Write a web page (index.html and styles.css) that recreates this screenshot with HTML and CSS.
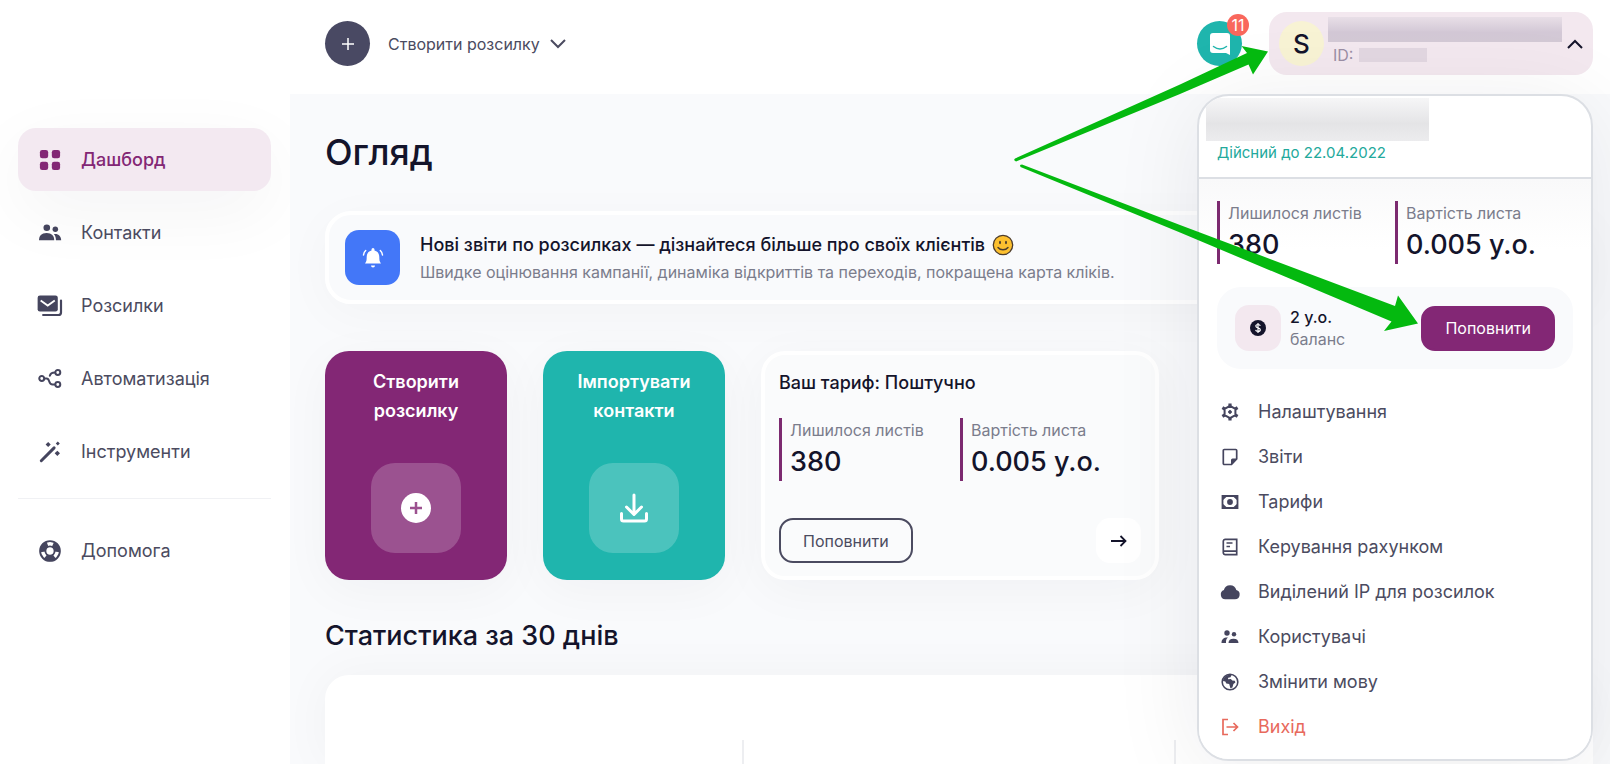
FILE: index.html
```html
<!DOCTYPE html>
<html lang="uk">
<head>
    <meta charset="UTF-8">
    <meta name="viewport" content="width=device-width, initial-scale=1.0">
    <title>Огляд</title>
    <link rel="stylesheet" href="styles.css">
</head>
<body>
    <div class="app">
        <aside class="sidebar">
            <nav class="nav">
                <a class="nav-item active" href="#dashboard">
                    <svg class="nav-icon" viewBox="0 0 24 24" fill="currentColor"><rect x="1" y="1" width="9" height="9" rx="2.500"/><rect x="14" y="1" width="9" height="9" rx="2.500"/><rect x="1" y="14" width="9" height="9" rx="2.500"/><rect x="14" y="14" width="9" height="9" rx="2.500"/></svg>
                    Дашборд
                </a>
                <a class="nav-item" href="#contacts">
                    <svg class="nav-icon" viewBox="0 0 24 24" fill="currentColor"><circle cx="8.500" cy="6.300" r="3.600"/><circle cx="17.800" cy="8" r="3"/><path d="M0 20c0-4.800 2.700-7.900 8.300-7.900s8.300 3.100 8.300 7.900z"/><path d="M18.500 20c0-2.900-.8-5.200-2.300-6.900 4.700-.8 8 2 8 6.900z"/></svg>
                    Контакти
                </a>
                <a class="nav-item" href="#campaigns">
                    <svg class="nav-icon" viewBox="0 0 24 24" fill="currentColor"><rect x="-1.500" y=".5" width="22" height="17.500" rx="2.500"/><path d="M1.800 6l7.700 5.500L17.200 6" fill="none" stroke="#fff" stroke-width="2"/><path d="M24 6v13a2.800 2.800 0 0 1-2.800 2.800H4.500" fill="none" stroke="currentColor" stroke-width="2.400" stroke-linecap="round"/></svg>
                    Розсилки
                </a>
                <a class="nav-item" href="#automation">
                    <svg class="nav-icon" viewBox="0 0 24 24" fill="none" stroke="currentColor" stroke-width="2.200"><circle cx="3" cy="11.500" r="2.700"/><circle cx="20.500" cy="5" r="2.700"/><circle cx="20.500" cy="18" r="2.700"/><path d="M6 11.500h2.300c4 0 1.500 6.500 6.500 6.500h2.800M11.800 8.500c.6-2.400 2-3.500 5.600-3.500" stroke-linecap="round"/></svg>
                    Автоматизація
                </a>
                <a class="nav-item" href="#tools">
                    <svg class="nav-icon" viewBox="0 0 24 24" fill="currentColor"><path d="M2.500 21.500L16.500 7.500" stroke="currentColor" stroke-width="3.200" stroke-linecap="round"/><path d="M10 1l2.800 2.800L10 6.600 7.200 3.800zM20.500.5l2.200 2.200-2.200 2.200-2.200-2.200zM20 10.500l2.900 2.900-2.900 2.900-2.900-2.900z"/></svg>
                    Інструменти
                </a>
            </nav>
            <hr class="nav-line">
            <a class="nav-item" href="#help">
                <svg class="nav-icon" viewBox="0 0 24 24"><circle cx="12" cy="12" r="7.800" fill="none" stroke="currentColor" stroke-width="6.500" stroke-dasharray="10.340 6" stroke-dashoffset="-7.090"/><circle cx="12" cy="12" r="10.800" fill="none" stroke="currentColor" stroke-width="2"/><circle cx="12" cy="12" r="5" fill="none" stroke="currentColor" stroke-width="2"/></svg>
                Допомога
            </a>
        </aside>

        <main class="main">
            <header class="topbar">
                <button class="create" type="button">
                    <span class="create-plus"><svg width="14" height="14" viewBox="0 0 14 14" fill="none" stroke="currentColor" stroke-width="1.500"><path d="M7 1v12M1 7h12"/></svg></span>
                    Створити розсилку
                    <svg width="16" height="10" viewBox="0 0 16 10" fill="none" stroke="currentColor" stroke-width="2"><path d="M1 1l7 7 7-7"/></svg>
                </button>
                <div class="topbar-right">
                    <button class="chat" type="button" aria-label="Чат">
                        <svg width="20" height="22" viewBox="0 0 20 22"><path d="M3 0h14a3 3 0 0 1 3 3v19l-4-2H3a3 3 0 0 1-3-3V3a3 3 0 0 1 3-3z" fill="#fff"/><path d="M3.500 13.500c4 3 9 3 13 0" fill="none" stroke="#1fb5ad" stroke-width="1.500" stroke-linecap="round"/></svg>
                        <span class="badge">11</span>
                    </button>
                    <div class="account">
                        <button class="account-btn" type="button" aria-expanded="true">
                            <span class="avatar">S</span>
                            <span class="account-info">
                                <span class="hidden-name"></span>
                                <span class="account-id">ID: <span class="hidden-id"></span></span>
                            </span>
                            <svg width="16" height="10" viewBox="0 0 16 10" fill="none" stroke="currentColor" stroke-width="2"><path d="M1 9l7-7 7 7"/></svg>
                        </button>
                        <div class="menu">
                            <div class="menu-head">
                                <div class="hidden-plan"></div>
                                <p class="valid">Дійсний до 22.04.2022</p>
                            </div>
                            <div class="menu-body">
                                <div class="stats">
                                    <div class="stat"><span class="stat-label">Лишилося листів</span><span class="stat-value">380</span></div>
                                    <div class="stat"><span class="stat-label">Вартість листа</span><span class="stat-value">0.005 у.о.</span></div>
                                </div>
                                <div class="balance">
                                    <span class="balance-icon"><svg width="16" height="16" viewBox="0 0 16 16"><circle cx="8" cy="8" r="8" fill="#14142b"/><path d="M10.300 5.800C10 4.900 9.200 4.500 8 4.500c-1.300 0-2.200.6-2.200 1.600 0 2.300 4.500 1.300 4.500 3.700 0 1.100-1 1.700-2.300 1.700s-2.200-.6-2.400-1.600M8 3v10" fill="none" stroke="#fff" stroke-width="1.200"/></svg></span>
                                    <span class="balance-text"><b>2 у.о.</b><span>баланс</span></span>
                                    <button class="btn btn-fill" type="button">Поповнити</button>
                                </div>
                                <nav class="menu-list">
                                    <a href="#settings"><svg class="menu-icon" viewBox="0 0 18 18" fill="none" stroke="currentColor"><path d="M9 2.800l5.400 3.100v6.200L9 15.200l-5.400-3.100V5.900z" stroke-width="2" stroke-linejoin="round"/><path d="M9 .5v3M9 14.500v3M1.400 4.700L4 6.200M14 11.800l2.600 1.500M1.400 13.300L4 11.800M14 6.200l2.600-1.500" stroke-width="3.200"/><circle cx="9" cy="9" r="1.400" fill="currentColor" stroke-width="1"/></svg>Налаштування</a>
                                    <a href="#reports"><svg class="menu-icon" viewBox="0 0 18 18"><path d="M3.300 1.500h11.400a1 1 0 0 1 1 1v8.500L10.500 16.500H3.300a1 1 0 0 1-1-1v-13a1 1 0 0 1 1-1z" fill="none" stroke="currentColor" stroke-width="1.700"/><path d="M16 10.500h-4.500a1.500 1.500 0 0 0-1.500 1.500v5z" fill="currentColor"/></svg>Звіти</a>
                                    <a href="#prices"><svg class="menu-icon" viewBox="0 0 18 18"><path d="M1.500 3h15v12h-15z" fill="none" stroke="currentColor" stroke-width="1.800"/><path d="M1 2.500h6L1 8zM17 2.500h-6L17 8zM1 15.500h6L1 10zM17 15.500h-6l6-5.500z" fill="currentColor"/><circle cx="9" cy="9" r="2.900" fill="currentColor"/></svg>Тарифи</a>
                                    <a href="#billing"><svg class="menu-icon" viewBox="0 0 18 18" fill="none" stroke="currentColor" stroke-width="1.700"><path d="M4.300 1.300h11.400v15.400H4.300a2 2 0 0 1-2-2V3.300a2 2 0 0 1 2-2zM2.500 13.200h13M5.500 5h6M5.500 8.500h3.500"/></svg>Керування рахунком</a>
                                    <a href="#ip"><svg class="menu-icon" viewBox="0 0 18 18" fill="currentColor"><path d="M4.200 16.200a4.700 4.700 0 0 1-1.300-9.100 6.400 6.400 0 0 1 12.400-.1A4.700 4.700 0 0 1 14 16.200z"/></svg>Виділений IP для розсилок</a>
                                    <a href="#users"><svg class="menu-icon" viewBox="0 0 18 18" fill="currentColor"><circle cx="6" cy="5" r="2.700"/><circle cx="13" cy="6.300" r="2.200"/><path d="M.5 15c0-3.700 2.200-5.600 6.500-5.400C5.300 10.900 4.800 12.600 5 15zM7.500 15c0-2.800 1.800-4.300 5-4.300s5 1.500 5 4.300z"/></svg>Користувачі</a>
                                    <a href="#language"><svg class="menu-icon" viewBox="0 0 18 18"><circle cx="9" cy="9" r="7.800" fill="none" stroke="currentColor" stroke-width="1.600"/><path d="M2 8C2.500 4 6 1.200 10.500 2L9.500 4.300l-2.300.4-.3 1.600 3-.3 1.300 1.500 2.600.3.600 1.700-2 1.600-1 3.400-2 .8-1.200-4.400-2.900-.5-1-2z" fill="currentColor"/></svg>Змінити мову</a>
                                    <a class="logout" href="#logout"><svg class="menu-icon" viewBox="0 0 18 18" fill="none" stroke="currentColor" stroke-width="1.700"><path d="M7 1.500H2v15h5M5.500 9h11M12.500 5l4 4-4 4"/></svg>Вихід</a>
                                </nav>
                            </div>
                        </div>
                    </div>
                </div>
                <!-- pointers to the account button and the top-up button -->
                <svg class="arrows" width="410" height="300" viewBox="1010 40 410 300" fill="#04b90f" aria-hidden="true">
                    <path d="M1014 160L1015 158.500 1180 84.500 1247 53 1241.500 46 1268 51.500 1253 74.500 1248.500 64.500 1180 94 1016 161.500z"/>
                    <path d="M1020 165L1022 164.500 1180 225 1395 306 1398 295.500 1418 323.500 1384 331 1391.500 321.500 1180 232.500 1020.500 167z"/>
                </svg>
            </header>

            <section class="content">
                <h1>Огляд</h1>
                <div class="banner">
                    <span class="banner-icon"><svg width="20" height="20" viewBox="0 0 20 20" fill="#fff"><path d="M2 15.500c1.500-2 1.700-3.500 1.700-6.500 0-3.400 1.900-5.800 4.800-6.400V1.500a1.500 1.500 0 0 1 3 0v1.100c2.900.6 4.800 3 4.800 6.400 0 3 .2 4.500 1.700 6.500zM8 17.500h4a2 2 0 0 1-4 0z"/><path d="M2.700 2.500C1.300 3.700.7 5.200.5 7M17.300 2.500c1.400 1.200 2 2.700 2.200 4.500" fill="none" stroke="#fff" stroke-width="1.500" stroke-linecap="round"/></svg></span>
                    <div>
                        <h2 class="banner-title">Нові звіти по розсилках — дізнайтеся більше про своїх клієнтів <svg class="smile" width="22" height="22" viewBox="0 0 22 22"><circle cx="11" cy="11" r="9.700" fill="#fdc02f" stroke="#4d3c2c" stroke-width="1.300"/><ellipse cx="8" cy="8.500" rx="1" ry="1.800" fill="#4d3c2c"/><ellipse cx="14" cy="8.500" rx="1" ry="1.800" fill="#4d3c2c"/><path d="M6 13.500c2.500 3 7.500 3 10 0" fill="none" stroke="#4d3c2c" stroke-width="1.400" stroke-linecap="round"/></svg></h2>
                        <p class="banner-text">Швидке оцінювання кампанії, динаміка відкриттів та переходів, покращена карта кліків.</p>
                    </div>
                </div>

                <div class="cards">
                    <a class="action purple" href="#create">
                        Створити розсилку
                        <span class="action-icon"><svg width="30" height="30" viewBox="0 0 30 30"><circle cx="15" cy="15" r="15" fill="#fff"/><path d="M15 9v12M9 15h12" stroke="#9c518f" stroke-width="2.500"/></svg></span>
                    </a>
                    <a class="action teal" href="#import">
                        Імпортувати контакти
                        <span class="action-icon"><svg width="30" height="30" viewBox="0 0 30 30" fill="none" stroke="#fff" stroke-width="3" stroke-linecap="round" stroke-linejoin="round"><path d="M15 2v19M7.500 14l7.500 7.500 7.500-7.500M2.500 20.500v5.500a2 2 0 0 0 2 2h21a2 2 0 0 0 2-2v-5.500"/></svg></span>
                    </a>
                    <div class="plan">
                        <h2>Ваш тариф: Поштучно</h2>
                        <div class="stats">
                            <div class="stat"><span class="stat-label">Лишилося листів</span><span class="stat-value">380</span></div>
                            <div class="stat"><span class="stat-label">Вартість листа</span><span class="stat-value">0.005 у.о.</span></div>
                        </div>
                        <div class="plan-foot">
                            <button class="btn" type="button">Поповнити</button>
                            <a class="more" href="#plan" aria-label="Докладніше"><svg width="16" height="12" viewBox="0 0 16 12" fill="none" stroke="currentColor" stroke-width="1.800"><path d="M0 6h14.500M9.500 1l5 5-5 5"/></svg></a>
                        </div>
                    </div>
                </div>

                <h2 class="section-title">Статистика за 30 днів</h2>
                <div class="panel">
                    <div></div>
                    <div class="panel-mid"></div>
                    <div></div>
                </div>
            </section>
        </main>
    </div>
</body>
</html>
```

FILE: styles.css
```css
* {
    box-sizing: border-box;
}
body {
    margin: 0;
    font-family: Inter, "Liberation Sans", sans-serif;
    font-size: 16px;
    color: #4b4b60;
    background: #fff;
}
h1, h2, p {
    margin: 0;
    color: #14142b;
    font-weight: 500;
}
a {
    color: inherit;
    text-decoration: none;
}
button {
    font: inherit;
    color: inherit;
    background: none;
    border: 0;
    padding: 0;
    cursor: pointer;
}
svg {
    flex: none;
    overflow: visible;
}
.app {
    display: flex;
    min-height: 100vh;
}

/* sidebar */
.sidebar {
    flex: none;
    width: 290px;
    padding: 128px 19px 0 18px;
}
.nav {
    display: flex;
    flex-direction: column;
    gap: 10px;
}
.nav-item {
    display: flex;
    align-items: center;
    gap: 19px;
    height: 63px;
    padding: 0 20px;
    border-radius: 18px;
    font-size: 18px;
}
.nav-item.active {
    color: #832775;
    font-weight: 500;
    background: #f3e9f1;
    box-shadow: 0 20px 70px rgba(20, 20, 43, 0.05);
}
.nav-icon {
    width: 24px;
    height: 24px;
    padding: 1px;
    color: #45455e;
}
.active .nav-icon {
    color: #832775;
}
.nav-line {
    margin: 15px 0 20px;
    border: 0;
    border-top: 1px solid #f0f1f4;
}

/* top bar */
.main {
    flex: 1;
    min-width: 0;
    display: flex;
    flex-direction: column;
}
.topbar {
    position: relative;
    z-index: 1;
    display: flex;
    justify-content: space-between;
    padding: 12px 17px 19px 35px;
}
.create {
    display: flex;
    align-items: center;
    gap: 10px;
}
.create-plus {
    display: flex;
    align-items: center;
    justify-content: center;
    width: 45px;
    height: 45px;
    margin-right: 8px;
    border-radius: 50%;
    color: #fff;
    background: #494963;
}
.topbar-right {
    display: flex;
    align-items: center;
    gap: 27px;
}
.chat {
    position: relative;
    display: flex;
    align-items: center;
    justify-content: center;
    width: 45px;
    height: 45px;
    border-radius: 50%;
    background: #1fb5ad;
}
.badge {
    position: absolute;
    top: -7px;
    right: -7px;
    width: 22px;
    border-radius: 50%;
    line-height: 22px;
    color: #fff;
    background: #f9675c;
}
.account {
    position: relative;
}
.account-btn {
    display: flex;
    align-items: center;
    width: 324px;
    height: 63px;
    padding: 0 10px;
    border-radius: 18px;
    color: #14142b;
    background: #f3e8ef;
}
.avatar {
    flex: none;
    width: 45px;
    border-radius: 50%;
    font-size: 26px;
    font-weight: 500;
    line-height: 45px;
    background: #f8f3d4;
}
.account-info {
    flex: 1;
    display: flex;
    flex-direction: column;
    gap: 3px;
    margin: 0 5px 0 4px;
    padding-bottom: 6px;
}
.hidden-name {
    height: 25px;
    background: linear-gradient(#e8dfe7, #d3c8d6 60%, #d3c9d5);
}
.account-id {
    display: flex;
    align-items: center;
    gap: 6px;
    padding-left: 5px;
    line-height: 20px;
    color: #9b8fa5;
}
.hidden-id {
    width: 68px;
    height: 14px;
    background: #e2d7e1;
}

/* account drop-down */
.menu {
    position: absolute;
    top: 82px;
    right: 0;
    width: 396px;
    overflow: hidden;
    border: 2px solid #dcdfe4;
    border-radius: 32px;
    background: #fff;
    box-shadow: 0 10px 90px rgba(20, 20, 43, 0.08);
}
.menu-head {
    padding: 2px 18px 12px 7px;
    border-bottom: 2px solid #dcdfe4;
}
.hidden-plan {
    width: 223px;
    height: 43px;
    background: linear-gradient(#f6f6f7, #e4e4e6 60%, #ececee);
}
.valid {
    padding-left: 11px;
    font-size: 15px;
    font-weight: 400;
    line-height: 24px;
    color: #23a99c;
}
.menu-body {
    padding: 22px 18px 10px;
    background: linear-gradient(#f9f9fa, #fff 70px);
}
.stats {
    display: flex;
}
.stat {
    flex: 1;
    display: flex;
    flex-direction: column;
    padding-left: 8px;
    border-left: 3px solid #7c2a70;
}
.stat-label {
    line-height: 24px;
    color: #7b7d8c;
}
.stat-value {
    font-size: 27px;
    font-weight: 500;
    line-height: 39px;
    color: #14142b;
}
.balance {
    display: flex;
    align-items: center;
    margin-top: 23px;
    padding: 18px;
    border-radius: 24px;
    background: #f9fafc;
}
.balance-icon {
    display: flex;
    align-items: center;
    justify-content: center;
    width: 46px;
    height: 46px;
    border-radius: 14px;
    background: #f3e8ef;
}
.balance-text {
    flex: 1;
    display: flex;
    flex-direction: column;
    margin-left: 9px;
    line-height: 22px;
    color: #7b7d8c;
}
.balance-text b {
    font-weight: 500;
    color: #14142b;
}
.btn {
    height: 45px;
    padding: 0 22px;
    border: 2px solid #4b4b60;
    border-radius: 14px;
}
.btn-fill {
    border-color: #832775;
    color: #fff;
    background: #832775;
}
.menu-list {
    display: flex;
    flex-direction: column;
    margin-top: 20px;
}
.menu-list a {
    display: flex;
    align-items: center;
    gap: 19px;
    padding-left: 4px;
    font-size: 18px;
    line-height: 45px;
}
.menu-icon {
    width: 18px;
    height: 18px;
    color: #45455e;
}
.menu-list .logout, .logout .menu-icon {
    color: #e8695c;
}
.arrows {
    position: absolute;
    top: 40px;
    right: 190px;
    pointer-events: none;
}

/* page */
.content {
    flex: 1;
    display: flex;
    flex-direction: column;
    padding: 36px 17px 0 35px;
    background: #f9fafc;
}
h1 {
    font-size: 36px;
    line-height: 44px;
}
.banner {
    display: flex;
    align-items: center;
    gap: 20px;
    margin: 37px 0 47px;
    padding: 15px 16px;
    border: 4px solid #fff;
    border-radius: 26px;
    box-shadow: 0 10px 50px rgba(20, 20, 43, 0.03);
}
.banner-icon {
    display: flex;
    align-items: center;
    justify-content: center;
    width: 55px;
    height: 55px;
    border-radius: 14px;
    background: #4377f8;
}
.banner-title {
    font-size: 18px;
    line-height: 29px;
}
.smile {
    vertical-align: -5px;
    margin-left: 2px;
}
.banner-text {
    font-weight: 400;
    line-height: 26px;
    color: #7b7d8c;
}
.cards {
    display: grid;
    grid-template-columns: 182px 182px 1fr 1fr;
    gap: 36px;
}
.action {
    display: flex;
    flex-direction: column;
    align-items: center;
    justify-content: space-between;
    padding: 16px 26px 27px;
    border-radius: 24px;
    font-size: 18px;
    font-weight: 600;
    line-height: 29px;
    text-align: center;
    color: #fff;
    box-shadow: 0 10px 50px rgba(20, 20, 43, 0.04);
}
.purple {
    background: #832775;
}
.teal {
    background: #1fb5ad;
}
.action-icon {
    display: flex;
    align-items: center;
    justify-content: center;
    width: 90px;
    height: 90px;
    border-radius: 24px;
    background: rgba(255, 255, 255, 0.2);
}
.plan {
    padding: 12px 14px 13px;
    border: 4px solid #fff;
    border-radius: 24px;
    background: #fafbfc;
    box-shadow: 0 10px 50px rgba(20, 20, 43, 0.04);
}
.plan h2 {
    margin-bottom: 20px;
    font-size: 18px;
    line-height: 31px;
}
.plan-foot {
    display: flex;
    justify-content: space-between;
    margin-top: 37px;
}
.more {
    display: flex;
    align-items: center;
    justify-content: center;
    width: 45px;
    height: 45px;
    border-radius: 14px;
    color: #14142b;
    background: #fff;
}
.section-title {
    margin: 38px 0 21px;
    font-size: 27px;
    line-height: 36px;
}
.panel {
    flex: 1;
    display: grid;
    grid-template-columns: 25fr 26fr 25fr;
    padding-top: 65px;
    border-radius: 24px 24px 0 0;
    background: #fff;
    box-shadow: 0 0 50px rgba(20, 20, 43, 0.04);
}
.panel-mid {
    border: solid #edeef1;
    border-width: 0 2px;
}
```
